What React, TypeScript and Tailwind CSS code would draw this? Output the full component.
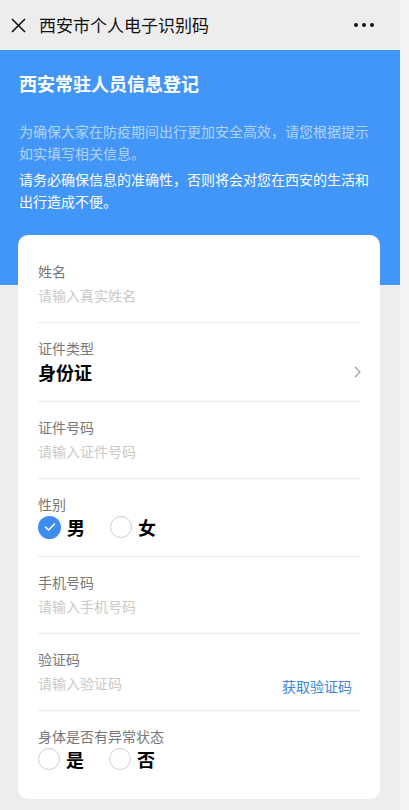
import { useState } from "react";

const font = { fontFamily: '"Noto Sans CJK SC", "Noto Sans", sans-serif' };

type FieldProps = {
  label: string;
  children: React.ReactNode;
  last?: boolean;
};

const Field = ({ label, children, last }: FieldProps) => (
  <div className={`pt-[15px] pb-[17px] ${last ? "" : "border-b border-[#ececec]"}`}>
    <div className="text-[14px] leading-[20px] text-[#777]">{label}</div>
    {children}
  </div>
);

const Placeholder = ({ text }: { text: string }) => (
  <div className="mt-[4px] text-[14px] leading-[20px] text-[#c9c9c9]">{text}</div>
);

const CheckIcon = () => (
  <svg width="12" height="10" viewBox="0 0 12 10" fill="none">
    <path d="M1.5 5.2 L4.6 8 L10.5 2" stroke="white" strokeWidth="1.6" strokeLinecap="round" strokeLinejoin="round" />
  </svg>
);

type RadioGroupProps = {
  options: string[];
  value: string | null;
  onChange: (v: string) => void;
};

const RadioGroup = ({ options, value, onChange }: RadioGroupProps) => (
  <div className="mt-[1px] flex items-center gap-[25px] h-[24px]">
    {options.map((opt) => {
      const checked = value === opt;
      return (
        <button key={opt} type="button" onClick={() => onChange(opt)} className="flex items-center gap-[6px]">
          {checked ? (
            <span className="w-[23px] h-[23px] rounded-full bg-[#3d8cf0] flex items-center justify-center">
              <CheckIcon />
            </span>
          ) : (
            <span className="w-[22px] h-[22px] rounded-full border border-[#cfcfcf] bg-white" />
          )}
          <span className="text-[18px] leading-[24px] font-bold text-black">{opt}</span>
        </button>
      );
    })}
  </div>
);

const App = () => {
  const [gender, setGender] = useState<string | null>("男");
  const [abnormal, setAbnormal] = useState<string | null>(null);

  return (
    <div className="flex w-[409px] h-[810px] overflow-hidden bg-[#f4f4f4]" style={font}>
      <div className="w-[400px] shrink-0 h-full bg-[#ededed] flex flex-col">
        {/* top bar */}
        <div className="h-[50px] shrink-0 flex items-center pl-[11px] pr-[26px]">
          <svg width="15" height="15" viewBox="0 0 15 15" fill="none">
            <path d="M1 1 L14 14 M14 1 L1 14" stroke="#111" strokeWidth="1.6" />
          </svg>
          <div className="ml-[13px] text-[17px] leading-[24px] text-[#111]">西安市个人电子识别码</div>
          <div className="ml-auto flex items-center gap-[4px]">
            <span className="w-[4px] h-[4px] rounded-full bg-[#111]" />
            <span className="w-[4px] h-[4px] rounded-full bg-[#111]" />
            <span className="w-[4px] h-[4px] rounded-full bg-[#111]" />
          </div>
        </div>

        {/* blue intro */}
        <div className="shrink-0 bg-[#4196f8] px-[19px] pt-[21px] pb-[73px]">
          <h1 className="text-[18px] leading-[24px] font-bold text-white">西安常驻人员信息登记</h1>
          <p className="mt-[25px] whitespace-nowrap text-[14px] leading-[22px] text-white/60">
            为确保大家在防疫期间出行更加安全高效，请您根据提示
            <br />
            如实填写相关信息。
          </p>
          <p className="mt-[4px] whitespace-nowrap text-[14px] leading-[22px] text-white">
            请务必确保信息的准确性，否则将会对您在西安的生活和
            <br />
            出行造成不便。
          </p>
        </div>

        {/* form card */}
        <div className="shrink-0 -mt-[50px] ml-[18px] w-[362px] bg-white rounded-[10px] px-[20px] pt-[11px] pb-[11px]">
          <Field label="姓名">
            <Placeholder text="请输入真实姓名" />
          </Field>
          <Field label="证件类型">
            <div className="mt-[2px] flex items-center justify-between">
              <span className="text-[18px] leading-[24px] font-bold text-black">身份证</span>
              <svg width="7" height="12" viewBox="0 0 7 12" fill="none" className="mr-[-1px]">
                <path d="M1 1 L6 6 L1 11" stroke="#9a9a9a" strokeWidth="1.1" />
              </svg>
            </div>
          </Field>
          <Field label="证件号码">
            <Placeholder text="请输入证件号码" />
          </Field>
          <Field label="性别">
            <RadioGroup options={["男", "女"]} value={gender} onChange={setGender} />
          </Field>
          <Field label="手机号码">
            <Placeholder text="请输入手机号码" />
          </Field>
          <Field label="验证码">
            <div className="flex items-start justify-between pr-[8px]">
              <Placeholder text="请输入验证码" />
              <button type="button" className="mt-[10px] text-[14px] leading-[14px] text-[#3a86d6]">
                获取验证码
              </button>
            </div>
          </Field>
          <Field label="身体是否有异常状态" last>
            <RadioGroup options={["是", "否"]} value={abnormal} onChange={setAbnormal} />
          </Field>
        </div>
      </div>
      <div className="w-[9px] h-full bg-[#f4f4f4]" />
    </div>
  );
};

export default App;
